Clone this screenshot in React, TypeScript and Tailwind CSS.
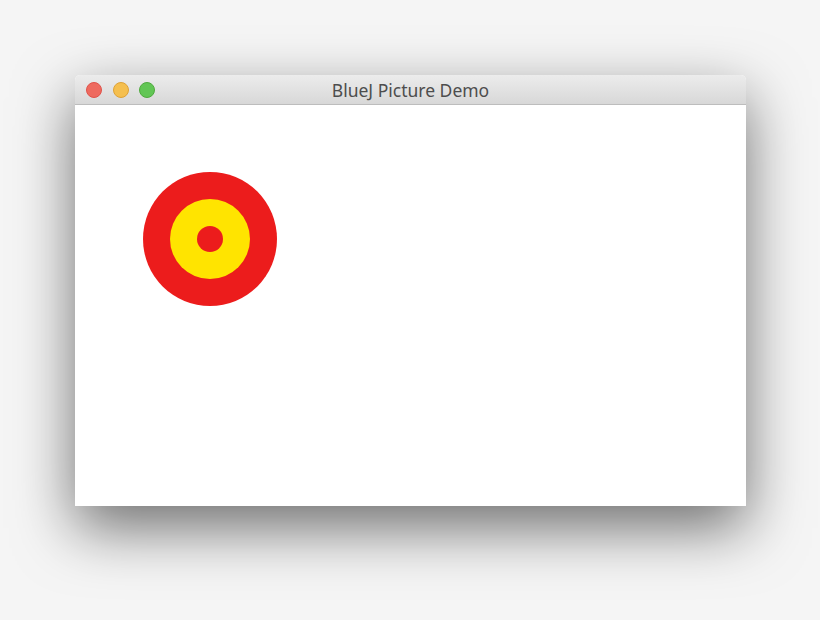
export default function App() {
  return (
    <div className="min-h-[620px] w-[820px] bg-[#f5f5f5] pl-[75px] pt-[75px] font-['Liberation_Sans',Arial,sans-serif]">
      <div className="flex h-[431px] w-[671px] flex-col overflow-hidden rounded-t-[5px] bg-white shadow-[0_22px_60px_rgba(0,0,0,0.55)]">
        <div className="relative flex h-[30px] shrink-0 items-center border-b border-[#bdbdbd] bg-gradient-to-b from-[#ececec] to-[#d8d8d8] px-[11px]">
          <div className="flex gap-[10.5px]">
            <span className="size-[16px] rounded-full border border-[#e0524a] bg-[#ee6a5f]" />
            <span className="size-[16px] rounded-full border border-[#dea236] bg-[#f5bf4f]" />
            <span className="size-[16px] rounded-full border border-[#4faa3e] bg-[#62c655]" />
          </div>
          <p className="absolute inset-x-0 top-[3px] text-center font-['Noto_Sans',sans-serif] text-[17.5px] leading-[24px] text-[#4d4d4d]">
            BlueJ Picture Demo
          </p>
        </div>
        <div className="flex-1 bg-white pl-[68px] pt-[67px]">
          <div className="flex size-[134px] items-center justify-center rounded-full bg-[#ec1c1c]">
            <div className="flex size-[80px] items-center justify-center rounded-full bg-[#ffe400]">
              <div className="size-[26px] rounded-full bg-[#ec1c1c]" />
            </div>
          </div>
        </div>
      </div>
    </div>
  )
}
